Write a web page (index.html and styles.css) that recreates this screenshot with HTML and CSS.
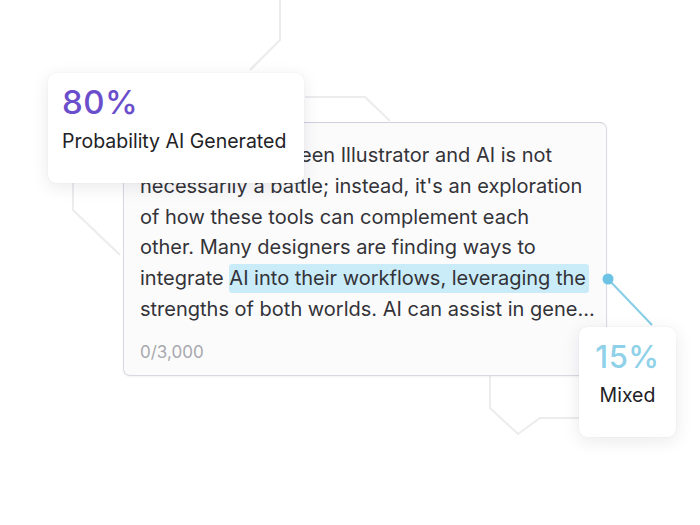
FILE: index.html
```html
<!DOCTYPE html>
<html lang="en">
<head>
<meta charset="utf-8">
<title>AI detector</title>
<link rel="stylesheet" href="styles.css">
</head>
<body>
<div class="stage">
  <svg class="deco" width="700" height="525" viewBox="0 0 700 525" aria-hidden="true">
    <path d="M280 0 V40 L250 70" />
    <path d="M305 97 H365 L390 121" />
    <path d="M73 183 V210 L120 255" />
    <path d="M490 376 V408 L518 434 L540 418 H580" />
  </svg>

  <div class="editor">
    <p class="text">The debate between Illustrator and AI is not<br>necessarily a battle; instead, it's an exploration<br>of how these tools can complement each<br>other. Many designers are finding ways to<br>integrate <mark class="hl">AI into their workflows, leveraging the</mark><br>strengths of both worlds. AI can assist in gene...</p>
    <div class="count">0/3,000</div>
  </div>

  <div class="badge badge-ai">
    <div class="pct pct-ai">80%</div>
    <div class="label">Probability AI Generated</div>
  </div>

  <svg class="connector" width="60" height="60" viewBox="0 0 60 60" aria-hidden="true">
    <line x1="8" y1="8" x2="52" y2="54" />
    <circle cx="8" cy="8" r="5.5" />
  </svg>

  <div class="badge badge-mixed">
    <div class="pct pct-mixed">15%</div>
    <div class="label">Mixed</div>
  </div>
</div>
</body>
</html>
```

FILE: styles.css
```css
* { box-sizing: border-box; }

html, body {
  margin: 0;
  padding: 0;
  background: #ffffff;
}

body {
  font-family: Inter, "Noto Sans", "Liberation Sans", sans-serif;
  color: #2b2b2f;
}

.stage {
  position: relative;
  width: 700px;
  height: 525px;
  overflow: hidden;
  padding: 122px 0 0 123px;
}

.deco {
  position: absolute;
  left: 0;
  top: 0;
}

.deco path {
  fill: none;
  stroke: #ececef;
  stroke-width: 2;
}

.editor {
  position: relative;
  width: 484px;
  height: 254px;
  background: #fbfbfc;
  border: 1px solid #d9d9e3;
  border-top-color: #cfcfdd;
  border-radius: 7px;
  padding: 17px 6px 0 16px;
  box-shadow: 0 1px 2px rgba(30, 30, 60, 0.06);
}

.text {
  margin: 0;
  font-size: 20px;
  line-height: 30.8px;
  color: #333338;
  white-space: nowrap;
  letter-spacing: 0;
}

.hl {
  background: #c9ecf8;
  color: inherit;
  border-radius: 3px;
  padding: 2px 3px 3px 0;
}

.count {
  margin-top: 16px;
  font-size: 17px;
  line-height: 22px;
  color: #a8a8ae;
}

.badge {
  position: absolute;
  background: #ffffff;
  border-radius: 8px;
  box-shadow: 0 4px 18px rgba(20, 20, 40, 0.09), 0 0 1px rgba(20, 20, 40, 0.12);
}

.badge-ai {
  left: 48px;
  top: 73px;
  width: 256px;
  height: 110px;
  padding: 8px 0 0 14px;
}

.pct {
  font-weight: 500;
  letter-spacing: 0.5px;
}

.pct-ai {
  font-size: 33px;
  line-height: 42px;
  color: #6a4ecb;
}

.label {
  font-size: 19.5px;
  line-height: 26px;
  color: #222226;
}

.badge-ai .label {
  margin-top: 5px;
}

.badge-mixed {
  left: 579px;
  top: 327px;
  width: 97px;
  height: 110px;
  padding-top: 10px;
  text-align: center;
}

.pct-mixed {
  font-size: 31px;
  line-height: 40px;
  color: #8fd1e8;
}

.badge-mixed .label {
  margin-top: 5px;
}

.connector {
  position: absolute;
  left: 600px;
  top: 271px;
}

.connector line {
  stroke: #86cde6;
  stroke-width: 2;
}

.connector circle {
  fill: #6cc3e4;
}
```
